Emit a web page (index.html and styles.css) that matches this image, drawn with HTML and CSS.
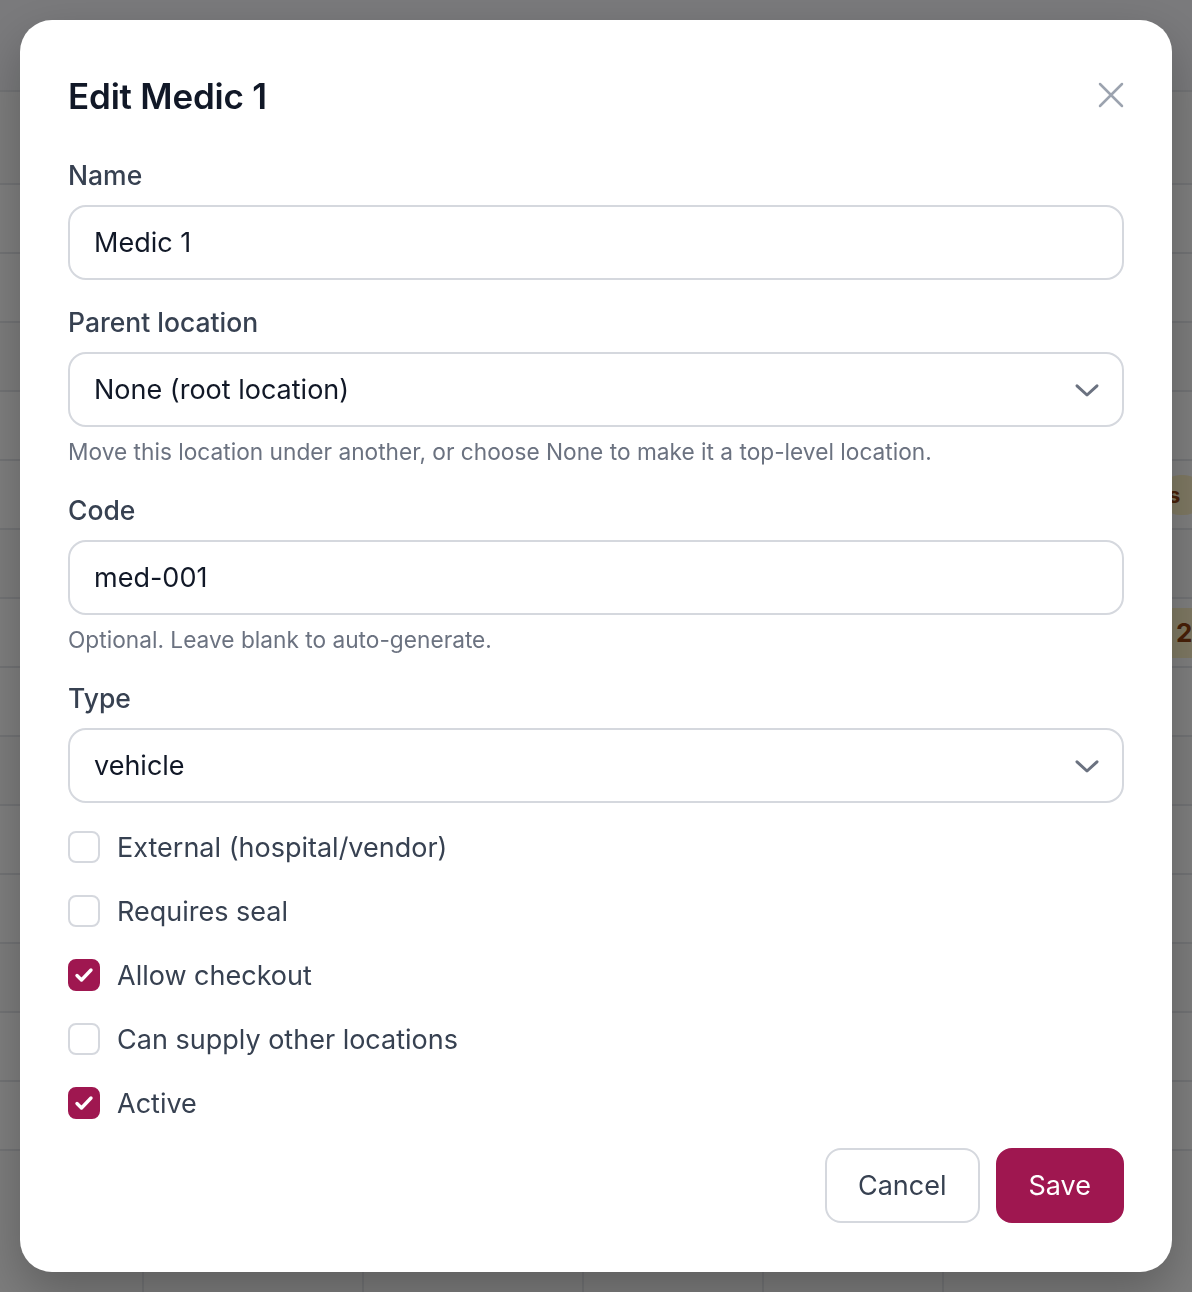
FILE: index.html
```html
<!DOCTYPE html>
<html lang="en">
<head>
<meta charset="utf-8">
<title>Edit Medic 1</title>
<link rel="stylesheet" href="styles.css">
</head>
<body>
<div class="page">
  <div class="page-top"></div>
  <div class="row first"></div>
  <div class="row"></div>
  <div class="row"></div>
  <div class="row"></div>
  <div class="row"></div>
  <div class="row"><span class="badge badge-s">s</span></div>
  <div class="row"></div>
  <div class="row"><span class="badge badge-n">2</span></div>
  <div class="row"></div>
  <div class="row"></div>
  <div class="row"></div>
  <div class="row"></div>
  <div class="row"></div>
  <div class="row"></div>
  <div class="row"></div>
  <div class="row cols">
    <div class="col c1"></div><div class="col c2"></div><div class="col c3"></div><div class="col c4"></div><div class="col c5"></div><div class="col c6"></div>
  </div>
</div>
<div class="overlay"></div>
<div class="modal" role="dialog" aria-labelledby="modal-title">
  <div class="modal-head">
    <h2 id="modal-title" class="modal-title">Edit Medic 1</h2>
    <button class="close" type="button" aria-label="Close">
      <svg width="44" height="44" viewBox="0 0 24 24" fill="none" stroke="currentColor" stroke-width="1.35" stroke-linecap="round"><path d="M6 6l12 12M18 6L6 18"/></svg>
    </button>
  </div>
  <form class="form">
    <div class="field">
      <label class="label">Name</label>
      <div class="input">Medic 1</div>
    </div>
    <div class="field">
      <label class="label">Parent location</label>
      <div class="input select">None (root location)
        <svg class="chev" width="40" height="40" viewBox="0 0 24 24" fill="none" stroke="currentColor" stroke-width="1.8" stroke-linecap="round" stroke-linejoin="round"><path d="M6 9.5l6 5.5 6-5.5"/></svg>
      </div>
      <p class="hint">Move this location under another, or choose None to make it a top-level location.</p>
    </div>
    <div class="field">
      <label class="label">Code</label>
      <div class="input">med-001</div>
      <p class="hint">Optional. Leave blank to auto-generate.</p>
    </div>
    <div class="field">
      <label class="label">Type</label>
      <div class="input select">vehicle
        <svg class="chev" width="40" height="40" viewBox="0 0 24 24" fill="none" stroke="currentColor" stroke-width="1.8" stroke-linecap="round" stroke-linejoin="round"><path d="M6 9.5l6 5.5 6-5.5"/></svg>
      </div>
    </div>
    <div class="checks">
      <div class="check"><span class="box"></span><span>External (hospital/vendor)</span></div>
      <div class="check"><span class="box"></span><span>Requires seal</span></div>
      <div class="check"><span class="box on"><svg width="24" height="24" viewBox="0 0 24 24" fill="none" stroke="#fff" stroke-width="3.4" stroke-linecap="round" stroke-linejoin="round"><path d="M5 12.5l4.5 4.5L19 7"/></svg></span><span>Allow checkout</span></div>
      <div class="check"><span class="box"></span><span>Can supply other locations</span></div>
      <div class="check"><span class="box on"><svg width="24" height="24" viewBox="0 0 24 24" fill="none" stroke="#fff" stroke-width="3.4" stroke-linecap="round" stroke-linejoin="round"><path d="M5 12.5l4.5 4.5L19 7"/></svg></span><span>Active</span></div>
    </div>
    <div class="actions">
      <button type="button" class="btn btn-cancel">Cancel</button>
      <button type="button" class="btn btn-save">Save</button>
    </div>
  </form>
</div>
</body>
</html>
```
FILE: styles.css
```css
* { box-sizing: border-box; }
html, body { margin: 0; padding: 0; }
html { height: 1292px; overflow: hidden; }
body {
  font-family: Inter, "Noto Sans", Arial, sans-serif;
  background: #ffffff;
  width: 1192px;
  height: 1292px;
  overflow: hidden;
}
.page { width: 1192px; height: 1292px; overflow: hidden; }
.page-top { height: 90px; background: #f4f5f8; }
.row {
  height: 69px;
  border-top: 2px solid #e5e7eb;
  position: relative;
  background: #ffffff;
}
.row.first { height: 93px; }
.row:nth-child(3n+2) { background: #fafafa; }
.badge {
  position: absolute;
  font-weight: 700;
  color: #92400e;
  background: #fef3c7;
}
.badge-s {
  right: -12px;
  top: 14px;
  width: 44px;
  height: 40px;
  border-radius: 20px;
  font-size: 22px;
  line-height: 40px;
  padding-left: 8px;
}
.badge-n {
  right: -30px;
  top: 9px;
  width: 70px;
  height: 50px;
  border-radius: 10px;
  font-size: 26px;
  line-height: 50px;
  padding-left: 24px;
}
.cols { display: flex; height: 143px; }
.col { border-right: 2px solid #e5e7eb; height: 100%; }
.c1 { width: 144px; }
.c2 { width: 220px; }
.c3 { width: 220px; }
.c4 { width: 180px; }
.c5 { width: 180px; }
.c6 { flex: 1; border-right: none; }

.overlay {
  position: fixed;
  inset: 0;
  background: rgba(0, 0, 0, 0.5);
}
.modal {
  position: fixed;
  left: 20px;
  top: 20px;
  width: 1152px;
  height: 1252px;
  background: #ffffff;
  border-radius: 32px;
  padding: 48px;
  box-shadow: 0 20px 50px rgba(0, 0, 0, 0.25);
}
.modal-head {
  display: flex;
  align-items: center;
  justify-content: space-between;
  height: 56px;
  margin-bottom: 31px;
}
.modal-title {
  margin: 0;
  font-size: 35px;
  line-height: 56px;
  font-weight: 600;
  color: #111827;
  letter-spacing: -0.2px;
}
.close {
  border: 0;
  background: none;
  padding: 0;
  color: #9ca3af;
  margin-right: -9px;
  margin-top: -2px;
  display: flex;
}
.form { display: flex; flex-direction: column; gap: 22px; }
.field { display: flex; flex-direction: column; }
.label {
  font-size: 26.5px;
  line-height: 40px;
  color: #374151;
  font-weight: 500;
  margin-bottom: 10px;
}
.input {
  height: 75px;
  border: 2px solid #d5d8de;
  border-radius: 18px;
  padding: 0 24px;
  display: flex;
  align-items: center;
  font-size: 27px;
  color: #111827;
}
.select { justify-content: space-between; }
.chev { color: #6b7280; margin-right: -9px; }
.hint {
  margin: 9px 0 0;
  font-size: 22.7px;
  line-height: 32px;
  color: #6b7280;
}
.checks {
  display: flex;
  flex-direction: column;
  gap: 22px;
  margin-top: 1px;
}
.check {
  display: flex;
  align-items: center;
  gap: 17px;
  height: 42px;
  font-size: 27px;
  color: #374151;
}
.box {
  width: 32px;
  height: 32px;
  border: 2px solid #d5d8de;
  border-radius: 8px;
  display: flex;
  align-items: center;
  justify-content: center;
  flex: none;
}
.box.on { background: #9f1750; border-color: #9f1750; }
.actions {
  display: flex;
  justify-content: flex-end;
  gap: 16px;
  margin-top: 2px;
}
.btn {
  height: 75px;
  border-radius: 16px;
  font-family: inherit;
  font-size: 27px;
  padding: 0 31px;
}
.btn-cancel { background: #fff; border: 2px solid #d5d8de; color: #374151; }
.btn-save { background: #9f1750; border: 2px solid #9f1750; color: #fff; }
```
